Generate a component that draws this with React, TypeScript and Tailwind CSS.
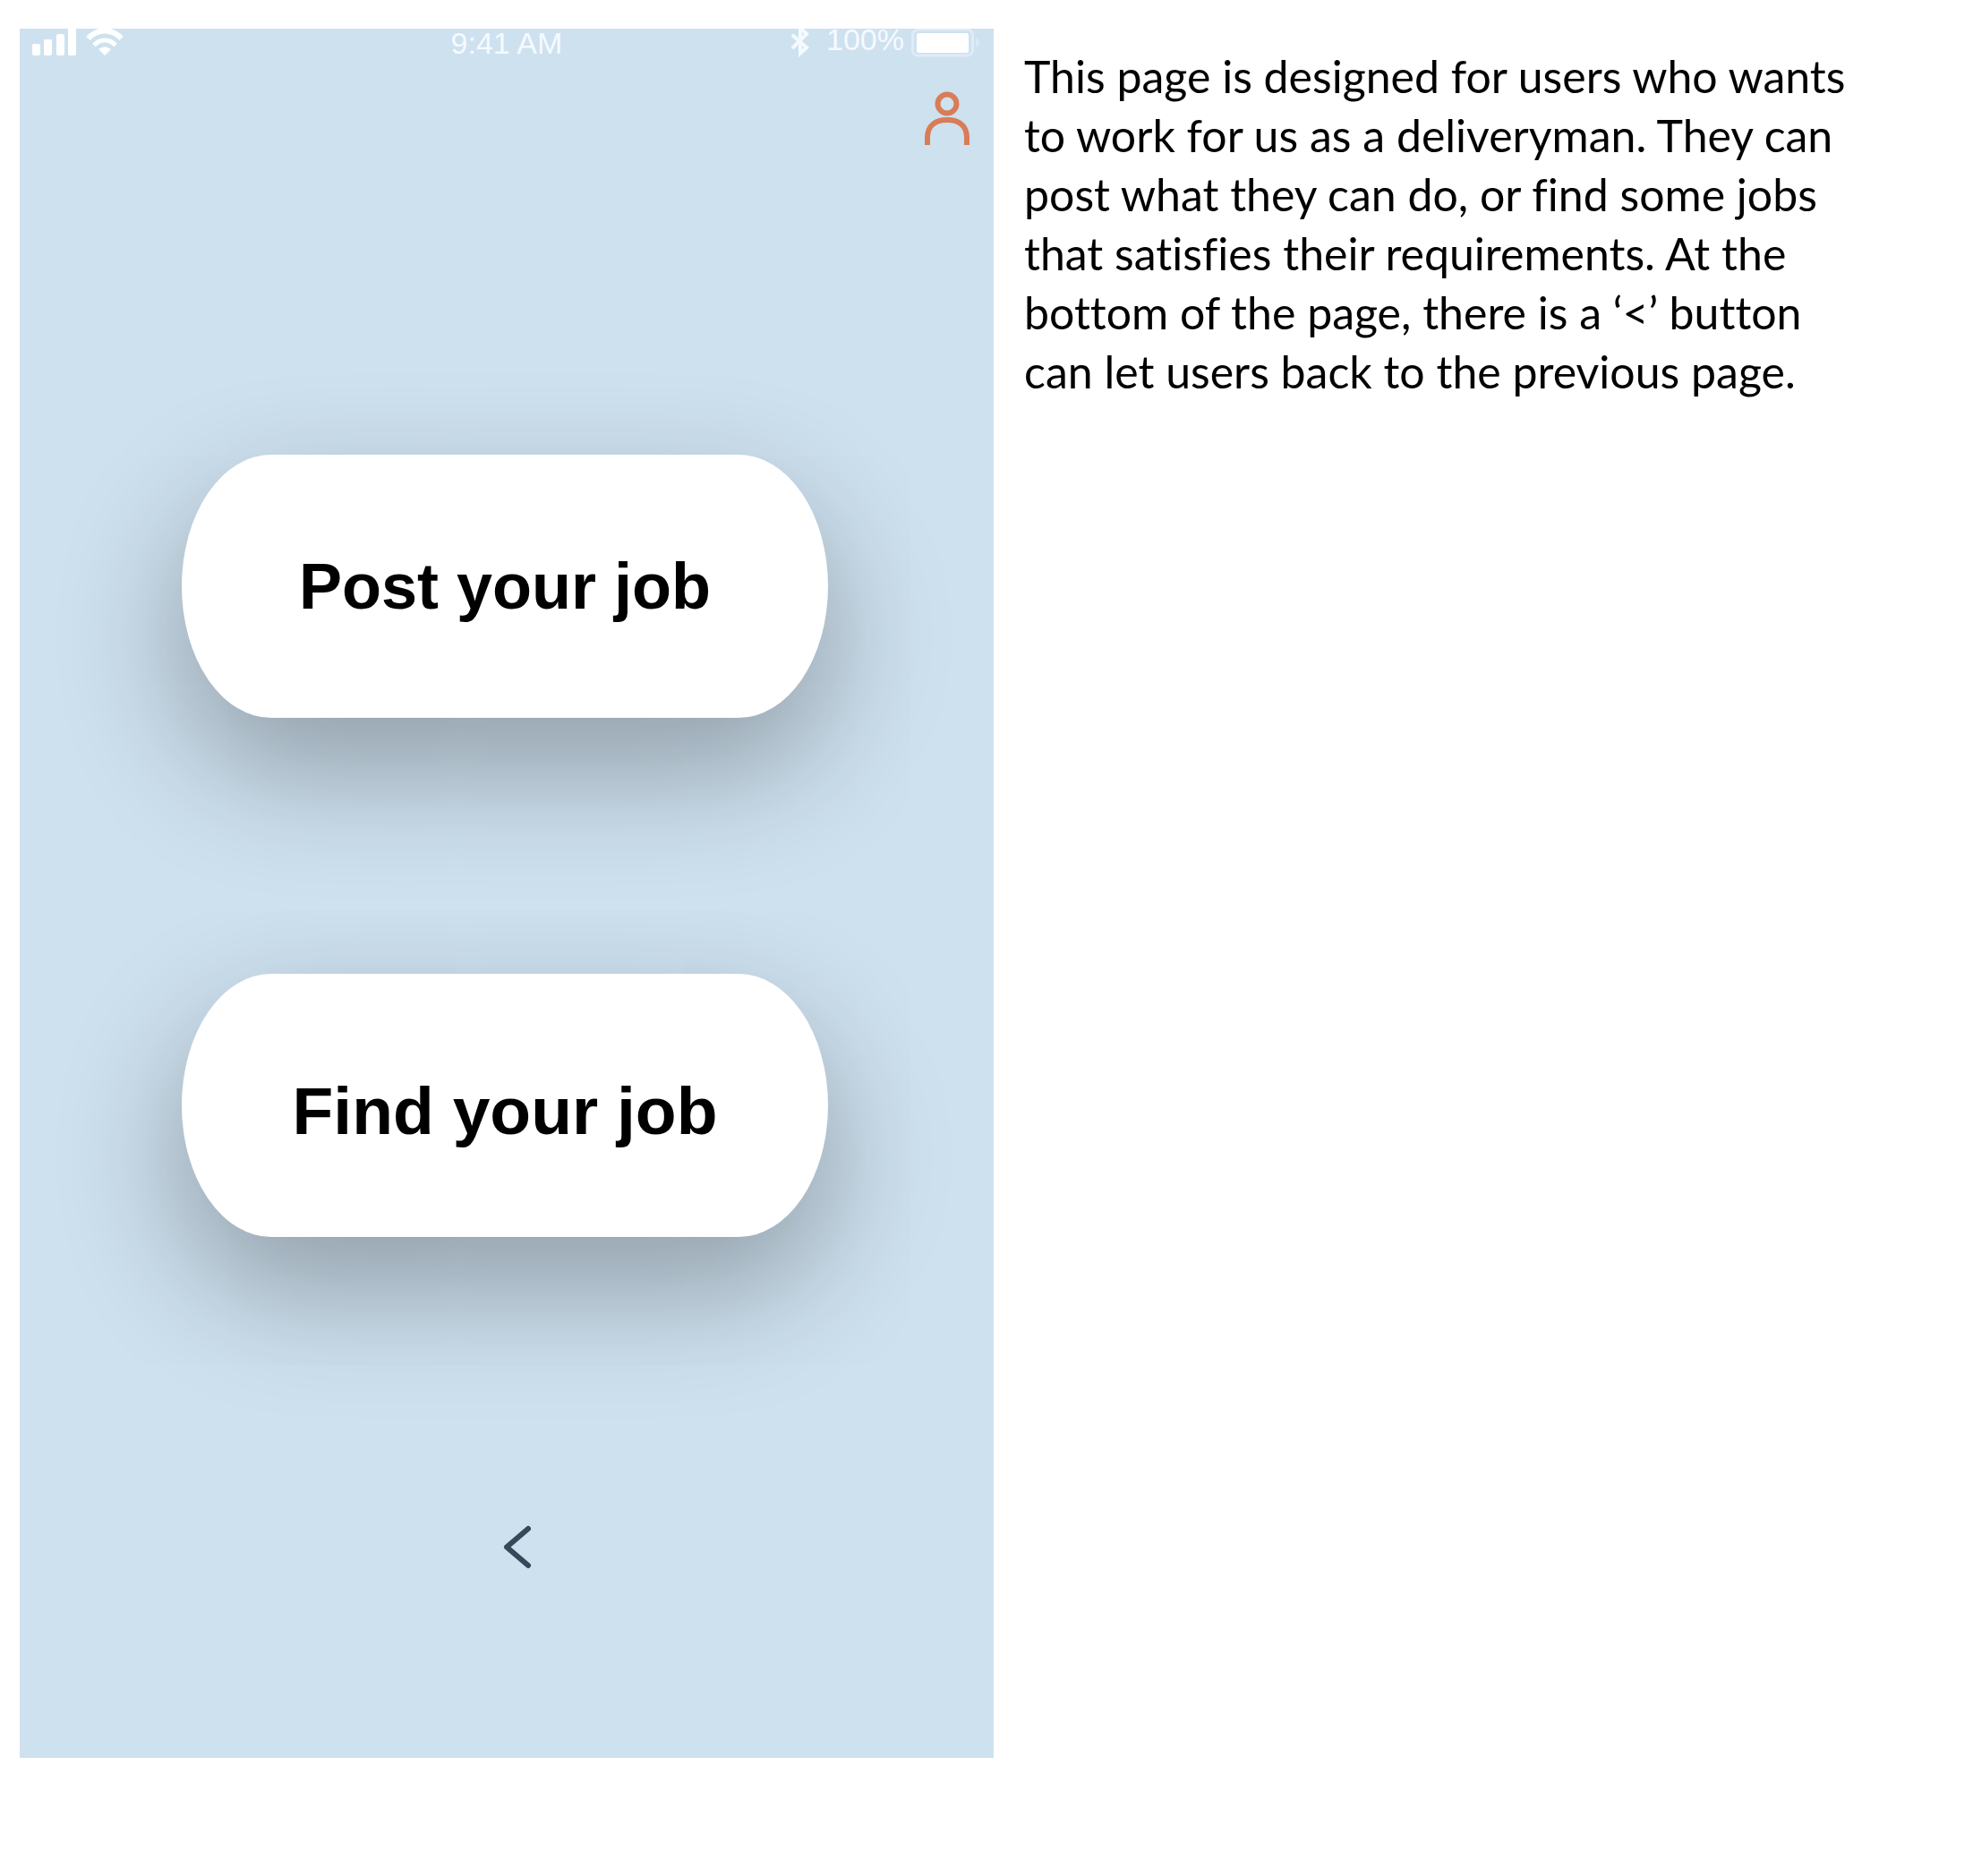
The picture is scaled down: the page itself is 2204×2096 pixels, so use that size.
import React from "react";

function SignalIcon() {
  return (
    <svg viewBox="0 0 50 30" className="h-[30px] w-[50px]" fill="currentColor" aria-hidden="true">
      <rect x="0" y="17" width="9" height="13" rx="2" />
      <rect x="13" y="12" width="9" height="18" rx="2" />
      <rect x="27" y="6" width="9" height="24" rx="2" />
      <rect x="40" y="-3" width="9" height="33" rx="2" />
    </svg>
  );
}

function WifiIcon() {
  return (
    <svg viewBox="0 0 42 30" className="h-[30px] w-[42px]" fill="none" stroke="currentColor" aria-hidden="true">
      <path d="M2.5 11 C12.5 -0.5 29.5 -0.5 39.5 11" strokeWidth="6" />
      <path d="M9 18.5 C15.5 11 26.5 11 33 18.5" strokeWidth="5" />
      <path d="M21 30 L14 23 Q21 17.5 28 23 Z" fill="currentColor" stroke="none" />
    </svg>
  );
}

function BluetoothIcon() {
  return (
    <svg
      viewBox="0 0 22 32"
      className="h-8 w-[22px]"
      fill="none"
      stroke="currentColor"
      strokeWidth="4"
      strokeLinejoin="miter"
      aria-hidden="true"
    >
      <path d="M2 7 L18 21 L11 27.500 V-1 L18 6 L2 22" />
    </svg>
  );
}

function BatteryIcon() {
  return (
    <svg viewBox="0 0 78 32" className="h-8 w-[78px]" fill="none" aria-hidden="true">
      <rect x="1.5" y="1" width="67" height="29" rx="6" stroke="#dfecf8" strokeWidth="3" />
      <rect x="6" y="5" width="58" height="22" rx="2" fill="#ffffff" />
      <path d="M73 11 Q77 15.500 73 20 Z" fill="#dfecf8" stroke="#dfecf8" strokeWidth="1" />
    </svg>
  );
}

function StatusBar() {
  return (
    <div className="grid h-8 grid-cols-3 items-start px-3.5 text-[34px] leading-8 text-[#f5faff]">
      <div className="flex items-start gap-2.5 text-white">
        <SignalIcon />
        <WifiIcon />
      </div>
      <time className="text-center">9:41 AM</time>
      <div className="flex items-start justify-end">
        <BluetoothIcon />
        <span className="-mt-1 mr-2 ml-[18px]">100%</span>
        <BatteryIcon />
      </div>
    </div>
  );
}

function JobButton({ label, className }: { label: string; className: string }) {
  return (
    <button
      type="button"
      className={
        "h-[294px] w-2/3 rounded-[100px/147px] bg-white font-bold text-black shadow-[0_56px_140px_rgba(0,0,0,0.31)] " +
        className
      }
    >
      {label}
    </button>
  );
}

function PhoneScreen() {
  return (
    <section className="w-full max-w-[1088px] overflow-hidden bg-[#cee1ef] pb-[208px] font-['Liberation_Sans',Arial,sans-serif]">
      <StatusBar />
      <div className="flex justify-end pt-9 pr-6">
        <button type="button" aria-label="Profile">
          <svg
            viewBox="0 0 56 64"
            className="h-16 w-14"
            fill="none"
            stroke="#d97c58"
            strokeWidth="6"
            strokeLinecap="butt"
            aria-hidden="true"
          >
            <circle cx="28" cy="16" r="10.500" />
            <path d="M6 62 V54 C6 40 15 34 28 34 C41 34 50 40 50 54 V62" />
          </svg>
        </button>
      </div>
      <div className="mt-[344px] flex flex-col items-center gap-[286px] pr-1">
        <JobButton label="Post your job" className="text-[72px]" />
        <JobButton label="Find your job" className="pt-3 text-[75px]" />
      </div>
      <div className="mt-[320px] flex justify-center pl-6">
        <button type="button" aria-label="Back">
          <svg
            viewBox="0 0 36 54"
            className="h-[54px] w-9"
            fill="none"
            stroke="#35495a"
            strokeWidth="6"
            strokeLinecap="round"
            strokeLinejoin="round"
            aria-hidden="true"
          >
            <path d="M30 6 L6 26.500 L30 47" />
          </svg>
        </button>
      </div>
    </section>
  );
}

export default function App() {
  return (
    <main className="flex min-h-screen items-start bg-white pt-8 pl-[22px]">
      <PhoneScreen />
      <p className="flex-1 shrink-0 pt-5 pl-[34px] font-['Lato',sans-serif] text-[50px] leading-[66px] whitespace-nowrap text-black [font-variant-ligatures:none]">
        This page is designed for users who wants
        <br />
        to work for us as a deliveryman. They can
        <br />
        post what they can do, or find some jobs
        <br />
        that satisfies their requirements. At the
        <br />
        bottom of the page, there is a ‘&lt;’ button
        <br />
        can let users back to the previous page.
      </p>
    </main>
  );
}
